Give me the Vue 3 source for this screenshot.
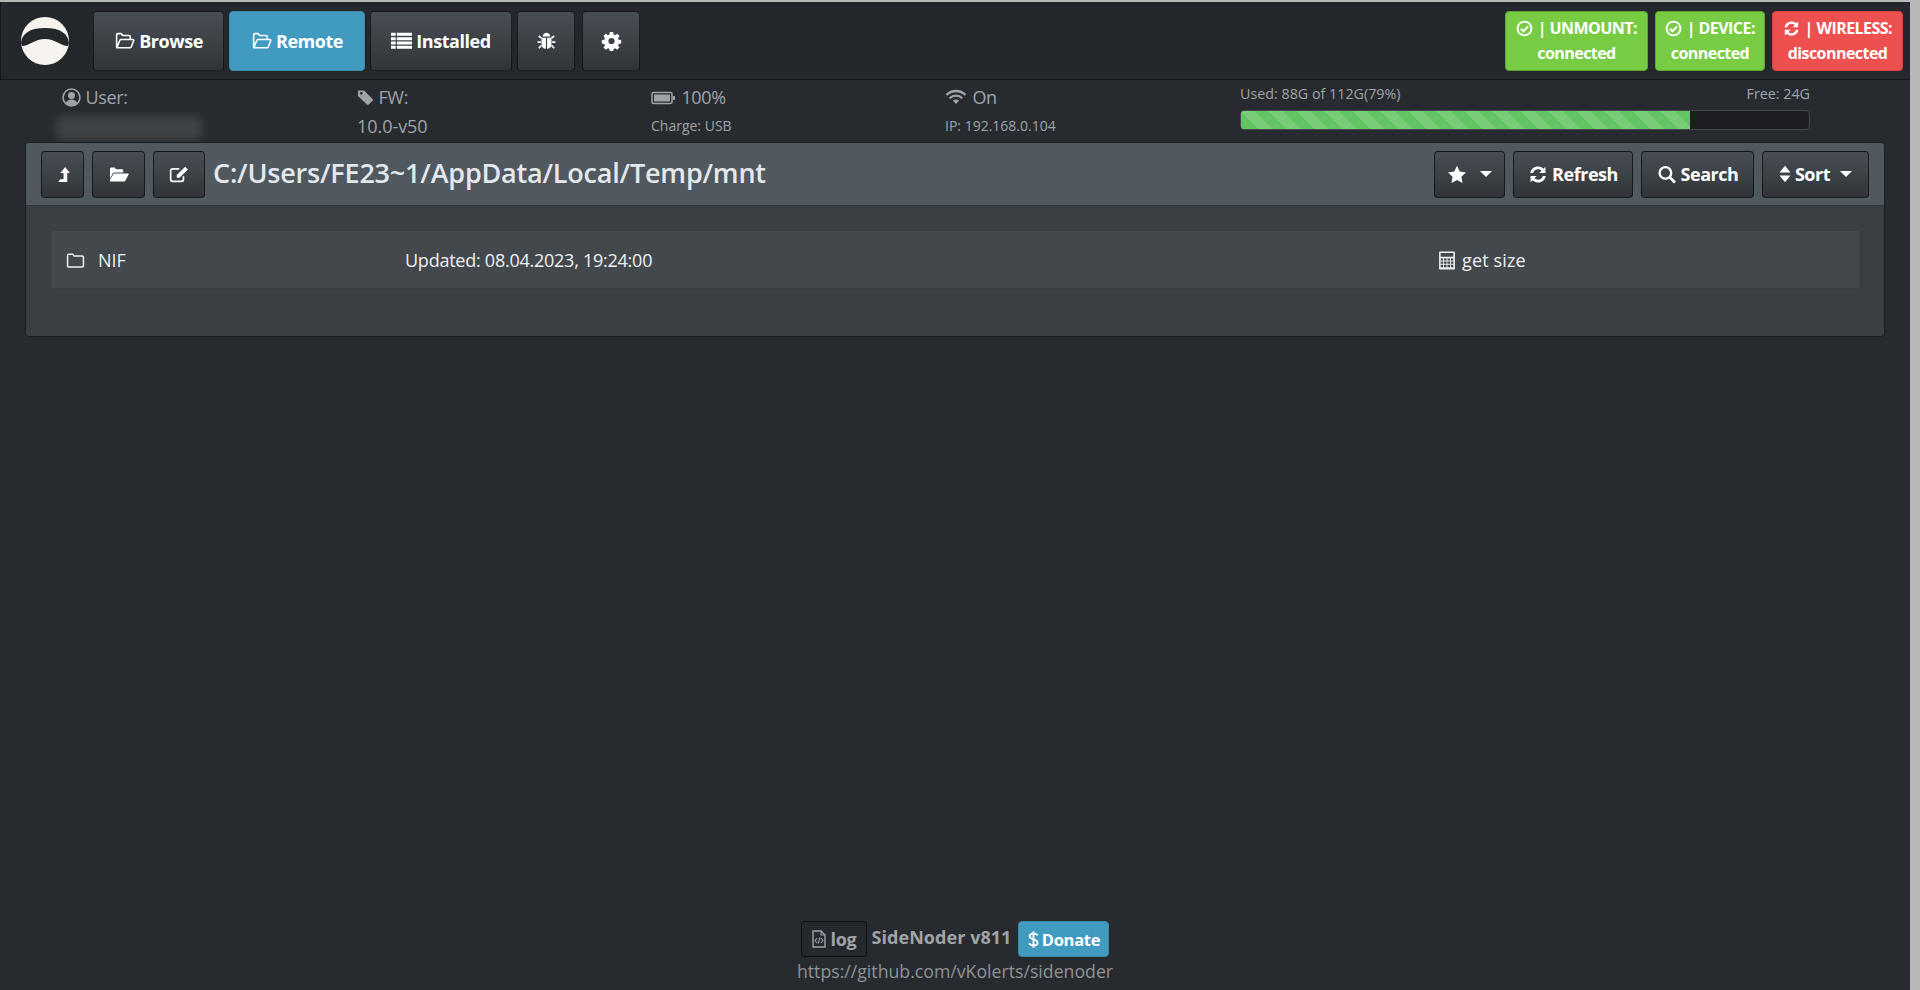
<script setup>
const navButtons = [
  { label: 'Browse', icon: 'folderOpenO', cls: 'w-browse' },
  { label: 'Remote', icon: 'folderOpenO', cls: 'w-remote active' },
  { label: 'Installed', icon: 'list', cls: 'w-installed' },
  { label: '', icon: 'bug', cls: 'w-bug' },
  { label: '', icon: 'gear', cls: 'w-gear' }
]
const statuses = [
  { name: 'UNMOUNT:', state: 'connected', icon: 'check', cls: 'ok s1' },
  { name: 'DEVICE:', state: 'connected', icon: 'check', cls: 'ok s2' },
  { name: 'WIRELESS:', state: 'disconnected', icon: 'refresh', cls: 'bad s3' }
]
const icons = {
  folderOpenO: { v: '0 0 20 18', s: '<path d="M2.500 15.500V3.200c0-.7.500-1.200 1.200-1.200h3.200l1.400 1.700h6c.7 0 1.200.5 1.200 1.200v2M2.600 15.500l3-7.200c.2-.5.6-.8 1.200-.8h11c.8 0 1.200.6.9 1.300l-2.300 5.900c-.2.5-.6.8-1.200.8z" fill="none" stroke="currentColor" stroke-width="1.500" stroke-linejoin="round"/>' },
  list: { v: '0 0 18 16', s: '<path d="M0 1h4v2.600H0zM5 1h13v2.600H5zM0 4.700h4v2.600H0zM5 4.700h13v2.600H5zM0 8.400h4V11H0zM5 8.400h13V11H5zM0 12.100h4v2.600H0zM5 12.100h13v2.600H5z" fill="currentColor"/>' },
  bug: { v: '0 0 18 18', s: '<path d="M5.500 5C6 2.500 7.300 1.500 9 1.500s3 1 3.500 3.500zM4.500 6h4v10c-2.500 0-4-1.800-4-4.500zM9.500 6h4v5.500c0 2.700-1.500 4.500-4 4.500z" fill="currentColor"/><path d="M4.500 6.500 2 4.500M13.500 6.500l2.500-2M4 10H1M14 10h3M4.500 13l-2.500 2.500M13.500 13l2.500 2.500" stroke="currentColor" stroke-width="1.500" fill="none"/>' },
  gear: { v: '0 0 18 18', s: '<path fill-rule="evenodd" d="M7.500 1h3l.4 2.200 1.300.6 1.900-1.300 2.100 2.100-1.300 1.900.6 1.300 2.200.4v3l-2.200.4-.6 1.300 1.300 1.900-2.100 2.100-1.900-1.300-1.300.6-.4 2.200h-3l-.4-2.200-1.300-.6-1.900 1.300-2.100-2.100 1.300-1.900-.6-1.300-2.200-.4v-3l2.200-.4.6-1.300-1.300-1.900 2.100-2.100 1.900 1.300 1.300-.6zM9 6.200a2.800 2.800 0 1 0 0 5.600 2.800 2.800 0 0 0 0-5.600z" fill="currentColor"/>' },
  check: { v: '0 0 16 16', s: '<circle cx="8" cy="8" r="6.500" fill="none" stroke="currentColor" stroke-width="1.800"/><path d="M4.600 8.200l2.400 2.400 4.400-4.600" fill="none" stroke="currentColor" stroke-width="2"/>' },
  refresh: { v: '0 0 16 16', s: '<path d="M1.500 6.800C2 3.500 4.700 1.300 8 1.300c1.800 0 3.400.7 4.500 1.800L14.300 1.500v5.300H9l2-2C10.200 4 9.200 3.600 8 3.600c-2 0-3.600 1.300-4.100 3.200zM14.500 9.200C14 12.500 11.300 14.700 8 14.700c-1.800 0-3.400-.7-4.500-1.800l-1.800 1.600V9.200H7l-2 2c.8.800 1.800 1.200 3 1.200 2 0 3.600-1.300 4.100-3.200z" fill="currentColor"/>' },
  user: { v: '0 0 18 18', s: '<circle cx="9" cy="9" r="8" fill="none" stroke="currentColor" stroke-width="1.500"/><circle cx="9" cy="7.200" r="3.300" fill="currentColor"/><path d="M3.500 14.500c.8-2.600 2.800-3.700 5.500-3.700s4.700 1.100 5.500 3.700C13 16 11 16.800 9 16.800s-4-.8-5.500-2.300z" fill="currentColor"/>' },
  tag: { v: '0 0 18 18', s: '<path fill-rule="evenodd" d="M1 1.500h6.500L16.500 10.500c.6.600.6 1.400 0 2l-4 4c-.6.600-1.400.6-2 0L1 7.500zM4.500 3.200a1.400 1.400 0 1 0 0 2.800 1.400 1.400 0 0 0 0-2.800z" fill="currentColor"/>' },
  battery: { v: '0 0 24 14', s: '<rect x="1" y="1.500" width="20" height="11" rx="1.500" fill="none" stroke="currentColor" stroke-width="1.500"/><rect x="3" y="3.500" width="16" height="7" fill="currentColor"/><rect x="22" y="5" width="2" height="4" fill="currentColor"/>' },
  wifi: { v: '0 0 22 16', s: '<path d="M1.500 6C4 3.400 7.300 2 11 2s7 1.400 9.500 4M4.700 9.200C6.400 7.500 8.600 6.600 11 6.600s4.600.9 6.300 2.600" fill="none" stroke="currentColor" stroke-width="2.300"/><path d="M7.800 11.600c.9-.8 2-1.200 3.200-1.200s2.300.4 3.200 1.200L11 15z" fill="currentColor"/>' },
  levelUp: { v: '0 0 14 18', s: '<path d="M9 2l4.500 5.500H11v8.500H2.500l1.800-2.500H7.500V7.500H4.500z" fill="currentColor"/>' },
  folderOpen: { v: '0 0 20 16', s: '<path d="M1 12.500V2.300C1 1.600 1.500 1 2.200 1h3.500l1.300 1.700h6c.7 0 1.200.5 1.200 1.200V6H5.500c-.8 0-1.500.4-1.900 1.100z" fill="currentColor"/><path d="M5.500 7H19c.6 0 .9.600.6 1.100L16.500 14c-.3.600-.8.900-1.400.9H1.500c-.6 0-.9-.6-.6-1.100L4.100 7.900C4.400 7.300 4.900 7 5.500 7z" fill="currentColor"/>' },
  edit: { v: '0 0 18 16', s: '<path d="M13 9.500v3c0 1-.7 1.700-1.700 1.700H3.200c-1 0-1.700-.7-1.700-1.700V4.700C1.500 3.700 2.200 3 3.200 3h6" fill="none" stroke="currentColor" stroke-width="1.500"/><path d="M14.500 1l2.500 2.500-7.500 7.500H7V8.500z" fill="currentColor"/>' },
  star: { v: '0 0 18 18', s: '<path d="M9 .8l2.600 5.400 5.900.8-4.300 4.100 1 5.900L9 14.200 3.800 17l1-5.900L.5 7l5.900-.8z" fill="currentColor"/>' },
  search: { v: '0 0 18 18', s: '<circle cx="7.500" cy="7.500" r="5.500" fill="none" stroke="currentColor" stroke-width="2.200"/><path d="M11.500 11.500l5 5" stroke="currentColor" stroke-width="2.600" fill="none"/>' },
  sort: { v: '0 0 12 18', s: '<path d="M6 .8l5.500 6.700H.5zM.5 10.500h11L6 17.200z" fill="currentColor"/>' },
  folderO: { v: '0 0 18 16', s: '<path d="M1.500 13V3.200c0-.7.500-1.200 1.200-1.200h3.600l1.300 1.800h7.700c.7 0 1.200.5 1.200 1.200V13c0 .7-.5 1.200-1.200 1.200H2.700c-.7 0-1.200-.5-1.200-1.200z" fill="none" stroke="currentColor" stroke-width="1.400"/>' },
  calc: { v: '0 0 16 18', s: '<path fill-rule="evenodd" d="M1.500 .5h13c.6 0 1 .4 1 1v15c0 .6-.4 1-1 1h-13c-.6 0-1-.4-1-1v-15c0-.6.4-1 1-1zM2 2v3.500h12V2zM2 7v2h2.400V7zm3.200 0v2h2.400V7zm3.200 0v2h2.400V7zm3.200 0v2H14V7zM2 10v2h2.400v-2zm3.200 0v2h2.400v-2zm3.200 0v2h2.400v-2zm3.200 0v2H14v-2zM2 13v2.500h2.400V13zm3.200 0v2.500h2.400V13zm3.200 0v2.500h2.400V13zm3.200 0v2.500H14V13z" fill="currentColor"/>' },
  fileCode: { v: '0 0 16 18', s: '<path d="M2 1h8l4 4v12H2z" fill="none" stroke="currentColor" stroke-width="1.400"/><path d="M10 1v4h4M6 8l-2 2.500L6 13M10 8l2 2.500L10 13M8.800 7.500l-1.600 6" fill="none" stroke="currentColor" stroke-width="1.100"/>' },
  dollar: { v: '0 0 12 20', s: '<path d="M10.500 5.500C9.500 4 8 3.500 6 3.500c-2.500 0-4.200 1.100-4.200 3 0 4.300 8.700 2.500 8.700 7 0 2-1.900 3-4.500 3-2.200 0-3.800-.7-5-2.200M6 1v18" fill="none" stroke="currentColor" stroke-width="2"/>' }
}
</script>

<template>
  <div class="page">
    <div class="main">
      <nav class="navbar">
        <svg class="logo" viewBox="0 0 48 48" aria-hidden="true">
          <circle cx="24" cy="24" r="24" fill="#f7f3ee" />
          <path d="M0 26C1 17 8 11 24 11S47 17 48 26L47 29C40 29 34 22 24 22S8 29 1 29Z" fill="#24282d" />
        </svg>
        <div class="nav-buttons">
          <button v-for="b in navButtons" :key="b.icon + b.label" class="btn nav-btn" :class="b.cls">
            <svg class="ic" :viewBox="icons[b.icon].v" v-html="icons[b.icon].s"></svg>
            <span v-if="b.label">{{ b.label }}</span>
          </button>
        </div>
        <div class="statuses">
          <div v-for="s in statuses" :key="s.name" class="status" :class="s.cls">
            <div><svg class="ic-s" :viewBox="icons[s.icon].v" v-html="icons[s.icon].s"></svg> | {{ s.name }}</div>
            <div>{{ s.state }}</div>
          </div>
        </div>
      </nav>

      <section class="info">
        <div class="cell c1">
          <div class="top"><svg class="ii" :viewBox="icons.user.v" v-html="icons.user.s"></svg> User:</div>
          <div class="bottom"><div class="blurred"></div></div>
        </div>
        <div class="cell c2">
          <div class="top"><svg class="ii tag" :viewBox="icons.tag.v" v-html="icons.tag.s"></svg> FW:</div>
          <div class="bottom">10.0-v50</div>
        </div>
        <div class="cell c3">
          <div class="top"><svg class="ib" :viewBox="icons.battery.v" v-html="icons.battery.s"></svg> 100%</div>
          <div class="bottom small">Charge: USB</div>
        </div>
        <div class="cell c4">
          <div class="top"><svg class="iw" :viewBox="icons.wifi.v" v-html="icons.wifi.s"></svg> On</div>
          <div class="bottom small">IP: 192.168.0.104</div>
        </div>
        <div class="storage">
          <div class="storage-labels"><span>Used: 88G of 112G(79%)</span><span>Free: 24G</span></div>
          <div class="progress"><div class="bar" style="width: 79%"></div></div>
        </div>
      </section>

      <section class="panel">
        <header class="panel-head">
          <button class="btn tool t-up"><svg class="ic-t" :viewBox="icons.levelUp.v" v-html="icons.levelUp.s"></svg></button>
          <button class="btn tool t-open"><svg class="ic-t" :viewBox="icons.folderOpen.v" v-html="icons.folderOpen.s"></svg></button>
          <button class="btn tool t-edit"><svg class="ic-t" :viewBox="icons.edit.v" v-html="icons.edit.s"></svg></button>
          <h1 class="path">C:/Users/FE23~1/AppData/Local/Temp/mnt</h1>
          <div class="tools-right">
            <button class="btn tool t-star"><svg class="ic-t" :viewBox="icons.star.v" v-html="icons.star.s"></svg><i class="caret"></i></button>
            <button class="btn tool t-refresh"><svg class="ic-t" :viewBox="icons.refresh.v" v-html="icons.refresh.s"></svg>Refresh</button>
            <button class="btn tool t-search"><svg class="ic-t" :viewBox="icons.search.v" v-html="icons.search.s"></svg>Search</button>
            <button class="btn tool t-sort"><svg class="ic-sort" :viewBox="icons.sort.v" v-html="icons.sort.s"></svg>Sort<i class="caret"></i></button>
          </div>
        </header>
        <div class="panel-body">
          <div class="row">
            <div class="col-name"><svg class="ifo" :viewBox="icons.folderO.v" v-html="icons.folderO.s"></svg>NIF</div>
            <div class="col-date">Updated: 08.04.2023, 19:24:00</div>
            <div class="col-size"><svg class="ica" :viewBox="icons.calc.v" v-html="icons.calc.s"></svg>get size</div>
          </div>
        </div>
      </section>

      <footer class="footer">
        <div class="foot-line">
          <button class="btn log"><svg class="ilog" :viewBox="icons.fileCode.v" v-html="icons.fileCode.s"></svg>log</button>
          <b class="brand">SideNoder v811</b>
          <button class="btn donate"><svg class="idol" :viewBox="icons.dollar.v" v-html="icons.dollar.s"></svg>Donate</button>
        </div>
        <div class="url">https://github.com/vKolerts/sidenoder</div>
      </footer>
    </div>
    <div class="scrollbar"></div>
  </div>
</template>

<style>
html, body { margin: 0; background: #272b30; overflow: hidden; }
</style>

<style scoped>
.page {
  display: flex;
  height: 990px;
  font-family: "Open Sans", "Noto Sans", sans-serif;
  color: #c8c8c8;
  background: #272b30;
  box-sizing: border-box;
  border-top: 2px solid #b9b9b9;
}
.main { flex: 1; min-width: 0; display: flex; flex-direction: column; }
.scrollbar { width: 10px; background: #b8b8b8; }
.navbar {
  height: 78px;
  box-sizing: border-box;
  display: flex;
  align-items: center;
  padding: 0 7px 0 20px;
  background: #24282d;
  border-bottom: 1px solid #16181b;
  border-left: 1px solid #16181b;
}
.logo { width: 48px; height: 48px; margin-right: 24px; flex: none; }
.nav-buttons { display: flex; gap: 5px; margin-top: 1px; }
.btn {
  display: inline-flex;
  align-items: center;
  justify-content: center;
  box-sizing: border-box;
  font-family: inherit;
  font-weight: 700;
  color: #fff;
  border: 1px solid rgba(0, 0, 0, .6);
  border-radius: 4px;
  background: linear-gradient(#484e55, #3a3f44 60%, #313539);
  padding: 0;
}
.nav-btn { height: 60px; font-size: 18px; letter-spacing: -.45px; gap: 4px; }
.w-browse { width: 131px; }
.w-remote { width: 136px; }
.w-installed { width: 142px; }
.w-bug { width: 58px; }
.w-gear { width: 58px; margin-left: 2px; }
.active { background: #419abf; border-color: #3a8aab; }
.ic { width: 21px; height: 20px; flex: none; }
.ic-t { width: 20px; height: 19px; flex: none; }
.ic-sort { width: 12px; height: 18px; flex: none; }
.statuses { display: flex; gap: 7px; margin-left: auto; margin-top: 1px; }
.status {
  box-sizing: border-box;
  height: 60px;
  border-radius: 4px;
  color: #fff;
  font-size: 16px;
  font-weight: 700;
  line-height: 25px;
  text-align: center;
  padding-top: 4px;
  letter-spacing: -.55px;
}
.ic-s { width: 17px; height: 17px; vertical-align: -3px; margin-right: 1px; }
.ok { background: #77cc44; border: 1px solid #5fa636; }
.bad { background: #ee5050; border: 1px solid #d84444; }
.s1 { width: 143px; }
.s2 { width: 110px; }
.s3 { width: 131px; }
.info {
  height: 62px;
  display: flex;
  position: relative;
  color: #a0a3a6;
  font-size: 18px;
  letter-spacing: -.3px;
}
.cell { flex: none; padding-top: 4px; box-sizing: border-box; }
.c1 { width: 295px; margin-left: 62px; }
.c2 { width: 294px; }
.c3 { width: 294px; }
.c4 { width: 295px; }
.top { height: 28px; line-height: 26px; white-space: nowrap; }
.bottom { height: 28px; line-height: 28px; white-space: nowrap; letter-spacing: -.05px; }
.small { font-size: 14px; letter-spacing: 0; }
.ii { width: 19px; height: 19px; vertical-align: -3px; }
.tag { width: 17px; }
.ib { width: 24px; height: 14px; vertical-align: -1px; margin-right: 2px; }
.iw { width: 22px; height: 16px; vertical-align: -1px; margin-right: 1px; }
.blurred {
  width: 146px;
  height: 24px;
  margin: 4px 0 0 -6px;
  border-radius: 8px;
  background: #404346;
  filter: blur(4px);
}
.storage { width: 570px; padding-top: 3px; box-sizing: border-box; letter-spacing: 0; }
.storage-labels {
  display: flex;
  justify-content: space-between;
  font-size: 14.3px;
  line-height: 22px;
}
.progress {
  height: 20px;
  margin-top: 5px;
  box-sizing: border-box;
  background: #1c1e22;
  border: 1px solid #44484d;
  border-radius: 4px;
  overflow: hidden;
}
.bar {
  height: 100%;
  background-color: #62c462;
  background-image: linear-gradient(45deg, rgba(255,255,255,.15) 25%, transparent 25%, transparent 50%, rgba(255,255,255,.15) 50%, rgba(255,255,255,.15) 75%, transparent 75%, transparent);
  background-size: 28px 28px;
}
.panel {
  margin: 0 25px 0 25px;
  height: 195px;
  box-sizing: border-box;
  border: 1px solid #1c1e22;
  border-radius: 4px;
  background: #3a3f44;
  overflow: hidden;
  position: relative;
}
.panel-head {
  height: 63px;
  box-sizing: border-box;
  display: flex;
  align-items: center;
  padding: 0 15px 0 15px;
  background: #515960;
  border-bottom: 1px solid #33373b;
}
.tool { height: 47px; font-size: 18px; letter-spacing: -.45px; gap: 4px; }
.t-up { width: 43px; }
.t-open { width: 53px; margin-left: 8px; }
.t-edit { width: 52px; margin-left: 8px; }
.t-star { width: 71px; gap: 9px; }
.t-refresh { width: 120px; }
.t-search { width: 113px; }
.t-sort { width: 107px; }
.path {
  margin: -4px 0 0 8px;
  font-size: 27px;
  font-weight: 600;
  color: #e4e8ec;
  white-space: nowrap;
  letter-spacing: -.2px;
}
.tools-right { display: flex; gap: 8px; margin-left: auto; }
.caret {
  width: 0;
  height: 0;
  border-top: 6px solid #fff;
  border-left: 6px solid transparent;
  border-right: 6px solid transparent;
  margin-left: 4px;
}
.t-sort .caret { margin-left: 6px; }
.panel-body { padding: 25px 25px 0; }
.row {
  height: 58px;
  box-sizing: border-box;
  padding-top: 1px;
  display: flex;
  align-items: center;
  background: #43484d;
  border-bottom: 1px solid #383c41;
  color: #eef0f2;
  font-size: 18px;
  letter-spacing: -.25px;
}
.col-name { width: 354px; padding-left: 15px; box-sizing: border-box; display: flex; align-items: center; gap: 13px; letter-spacing: 0; }
.col-date { width: 1033px; }
.col-size { display: flex; align-items: center; gap: 6px; letter-spacing: .15px; }
.ifo { width: 19px; height: 17px; }
.ica { width: 18px; height: 19px; }
.footer { margin-top: auto; height: 67px; box-sizing: border-box; display: flex; flex-direction: column; align-items: center; margin-bottom: 2px; }
.foot-line { display: flex; align-items: center; gap: 5px; height: 36px; }
.log {
  width: 66px;
  height: 36px;
  font-size: 18px;
  letter-spacing: -.3px;
  color: #a0a3a6;
  background: #25292e;
  gap: 4px;
}
.ilog { width: 16px; height: 18px; }
.brand { color: #a0a3a6; font-size: 18px; letter-spacing: .05px; margin-top: -5px; white-space: nowrap; }
.donate { width: 91px; height: 36px; font-size: 16.5px; letter-spacing: -.3px; background: #419abf; border-color: #3a8aab; margin-left: 2px; gap: 3px; }
.idol { width: 11px; height: 19px; }
.url { color: #8f9296; font-size: 17.7px; line-height: 28px; }
</style>
